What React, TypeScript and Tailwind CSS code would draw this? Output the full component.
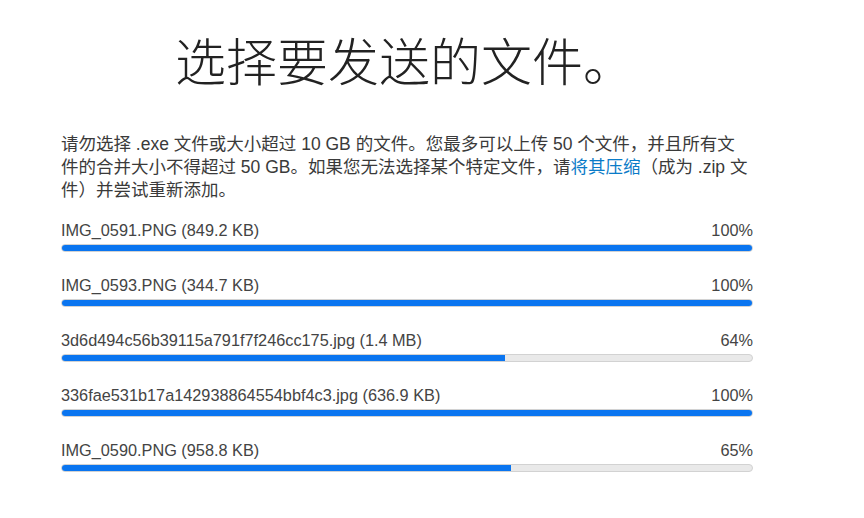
import React from "react";

const files = [
  { name: "IMG_0591.PNG (849.2 KB)", pct: 100 },
  { name: "IMG_0593.PNG (344.7 KB)", pct: 100 },
  { name: "3d6d494c56b39115a791f7f246cc175.jpg (1.4 MB)", pct: 64 },
  { name: "336fae531b17a142938864554bbf4c3.jpg (636.9 KB)", pct: 100 },
  { name: "IMG_0590.PNG (958.8 KB)", pct: 65 },
];

export default function App() {
  return (
    <div
      className="w-[864px] h-[518px] bg-white text-[#333]"
      style={{ fontFamily: '"Liberation Sans", Arial, "Noto Sans CJK SC", sans-serif' }}
    >
      <div className="ml-[61px] w-[692px] pt-[23px]">
        <h1
          className="pl-[114px] text-[51px] leading-[72px] font-light text-[#222]"
          style={{ fontFamily: '"Noto Sans CJK SC", sans-serif' }}
        >
          选择要发送的文件。
        </h1>
        <p className="mt-[38px] w-[700px] text-[17.5px] leading-[23px] text-[#3a3a3a] whitespace-nowrap">
          请勿选择 .exe 文件或大小超过 10 GB 的文件。您最多可以上传 50 个文件，并且所有文
          <br />
          件的合并大小不得超过 50 GB。如果您无法选择某个特定文件，请
          <span className="text-[#0a7bc8]">将其压缩</span>（成为 .zip 文
          <br />
          件）并尝试重新添加。
        </p>
        <div className="mt-[18px] flex flex-col gap-[23px]">
          {files.map((f) => (
            <div key={f.name} className="flex flex-col">
              <div className="flex justify-between text-[16.3px] leading-[20px] text-[#444]">
                <span>{f.name}</span>
                <span>{f.pct}%</span>
              </div>
              <div className="mt-[4px] h-[8px] w-full rounded-full bg-[#e9e9e9] border border-[#d2d2d2] overflow-hidden relative">
                <div
                  className="absolute -inset-px rounded-l-full bg-[#0a75f0]"
                  style={{ width: `calc(${f.pct}% + 2px)`, borderRadius: f.pct === 100 ? 9999 : undefined }}
                />
              </div>
            </div>
          ))}
        </div>
      </div>
    </div>
  );
}
